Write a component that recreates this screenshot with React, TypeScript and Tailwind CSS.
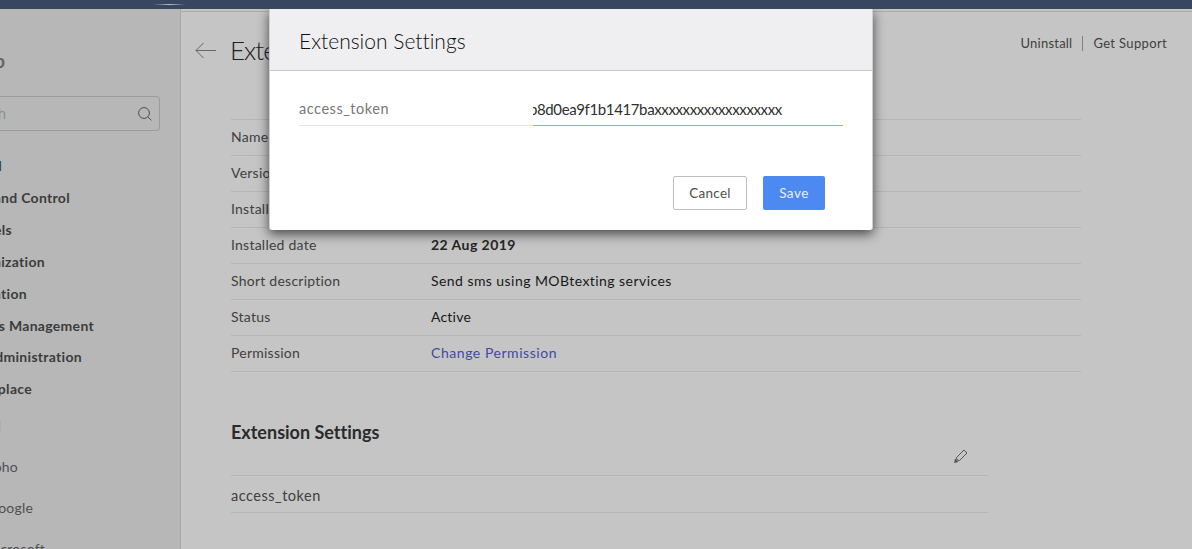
import React from "react";

const nav = [
  { t: "General", w: "w-[2px]", y: "h-8" },
  { t: "Users and Control", w: "w-[70px]", y: "h-8" },
  { t: "Channels", w: "w-[12px]", y: "h-8" },
  { t: "Customization", w: "w-[45px]", y: "h-8" },
  { t: "Automation", w: "w-[27px]", y: "h-8" },
  { t: "Sales Management", w: "w-[94px]", y: "h-8" },
  { t: "Data Administration", w: "w-[82px]", y: "h-[31px]" },
  { t: "Marketplace", w: "w-[32px]", y: "h-[33px]" },
];
const sub = [
  { t: "All", w: "w-[1px]", c: "text-[#4347b8]" },
  { t: "Zoho", w: "w-[18px]", c: "text-[#505050]" },
  { t: "Google", w: "w-[33px]", c: "text-[#505050]" },
  { t: "Microsoft", w: "w-[45px]", c: "text-[#505050]" },
];
const rows = [
  { k: "Name", v: "", c: "" },
  { k: "Version", v: "", c: "" },
  { k: "Installed by", v: "", c: "" },
  { k: "Installed date", v: "22 Aug 2019", c: "font-bold tracking-[0.45px] text-[#262626]" },
  { k: "Short description", v: "Send sms using MOBtexting services", c: "tracking-[0.44px] text-[#181818]" },
  { k: "Status", v: "Active", c: "tracking-[0.2px] text-[#181818]" },
  { k: "Permission", v: "Change Permission", c: "tracking-[0.55px] text-[#4149a3]" },
];

export default function App() {
  return (
    <div className="relative flex h-[549px] w-[1192px] flex-col overflow-hidden bg-[#c5c5c5] font-['Lato',sans-serif] text-[14px] text-[#404040] [font-variant-ligatures:none]">
      <header className="relative z-10 flex h-[9px] shrink-0 justify-start bg-[#384660] pl-[153px] pt-1">
        <div className="h-px w-[33px] bg-linear-to-r from-transparent via-[#b8bdc6] to-transparent" />
      </header>
      <div className="flex min-h-0 flex-1">
        <aside className="flex w-[181px] shrink-0 flex-col overflow-hidden border-r border-[#a8a8a8] bg-[#b7b7b7]">
          <div className="mt-[38px] flex h-7 w-[5px] shrink-0 items-center justify-end overflow-hidden whitespace-nowrap text-[19px] font-bold text-[#666]">Setup</div>
          <div className="mt-[21px] flex h-[35px] w-[160px] shrink-0 items-center justify-between rounded-r-[4px] border border-l-0 border-[#9c9c9c] pr-[7px]">
            <span className="flex w-[6px] justify-end overflow-hidden text-[15px] text-[#909090]">Search</span>
            <svg width="14" height="14" viewBox="0 0 14 14" fill="none" stroke="#505050"><circle cx="6" cy="6" r="5.4" /><path d="M10 10l3.4 3.4" /></svg>
          </div>
          <nav className="mt-[18px] flex flex-col">
            {nav.map((n) => (
              <div key={n.t} className={`flex shrink-0 items-center justify-end overflow-hidden whitespace-nowrap font-bold tracking-[0.3px] text-[#3c3c3c] ${n.w} ${n.y}`}>{n.t}</div>
            ))}
            {sub.map((n) => (
              <div key={n.t} className={`flex h-[41px] shrink-0 items-center justify-end overflow-hidden whitespace-nowrap tracking-[0.2px] ${n.c} ${n.w}`}>{n.t}</div>
            ))}
          </nav>
        </aside>
        <main className="mt-[2px] flex-1 border-t border-[#acacac] pl-[50px]">
          <div className="flex h-[107px] items-start justify-between pr-[25px]">
            <div className="-ml-[36px] mt-[18px] flex h-10 items-center gap-[14px]">
              <svg width="21" height="17" viewBox="0 0 21 17" fill="none" stroke="#666"><path d="M8.5 1L1 8.5L8.5 16M1 8.5H21" /></svg>
              <span className="text-[26px] font-light tracking-[-1px] text-[#202020]">Extension</span>
            </div>
            <div className="mt-[24px] flex h-[15px] items-center text-[13px]">
              <span className="tracking-[0.22px]">Uninstall</span><span className="mx-[10px] h-[15px] w-px bg-[#808080]" /><span className="tracking-[0.35px]">Get Support</span>
            </div>
          </div>
          <dl className="w-[850px] border-t border-[#b5b5b5]">
            {rows.map((r) => (
              <div key={r.k} className="flex h-9 items-center border-b border-[#b5b5b5] pb-[2px]">
                <dt className="w-[200px] tracking-[0.24px]">{r.k}</dt><dd className={r.c}>{r.v}</dd>
              </div>
            ))}
          </dl>
          <h2 className="mt-[46px] h-7 text-[18px] leading-7 font-bold text-[#2b2b2b]">Extension Settings</h2>
          <div className="flex h-[30px] w-[757px] justify-end border-b border-[#b5b5b5] pr-5 pt-[3px]">
            <svg width="14" height="14" viewBox="0 0 14 14" fill="none" stroke="#555"><path d="M2.5 8.5L10 1L13 4L5.5 11.5L3 11Z" /><path d="M0 14L1 9.5L4.5 13Z" fill="#555" stroke="none" /></svg>
          </div>
          <div className="flex h-[37px] w-[757px] items-center border-b border-[#b5b5b5] pt-[3px] text-[14.5px] tracking-[0.5px]">access_token</div>
        </main>
      </div>
      <section className="absolute left-[269px] top-[9px] h-[221px] w-[604px] rounded-b-[3px] border-x border-[#d0d0d0] bg-white shadow-[0_4px_12px_rgba(0,0,0,0.65)]">
        <h1 className="flex h-[62px] items-center border-b border-[#c6c6c6] bg-[#efeff1] pt-[2px] pl-[29px] text-[21px] font-light text-[#101010]">Extension Settings</h1>
        <div className="ml-[29px] mt-[24px] flex h-[31px] w-[544px]">
          <label className="w-[234px] border-b border-[#e5e5e5] text-[14.5px] leading-[27px] tracking-[0.53px] text-[#777]">access_token</label>
          <div className="flex flex-1 overflow-hidden border-b border-[#69c0e6] text-[15px] leading-[29px] tracking-[-0.38px] text-[#303030]">
            <span className="-ml-[4px]">b8d0ea9f1b1417baxxxxxxxxxxxxxxxxxx</span>
          </div>
        </div>
        <div className="mt-[50px] flex justify-end gap-4 pr-[47px] text-[13.5px]">
          <button className="h-[34px] w-[74px] rounded-[2px] border border-[#bfbfbf] pt-px tracking-[0.3px] text-[#505050]">Cancel</button>
          <button className="h-[34px] w-[62px] rounded-[2px] bg-[#4c8af1] pt-px tracking-[0.5px] text-[#e8f0ff]">Save</button>
        </div>
      </section>
    </div>
  );
}
